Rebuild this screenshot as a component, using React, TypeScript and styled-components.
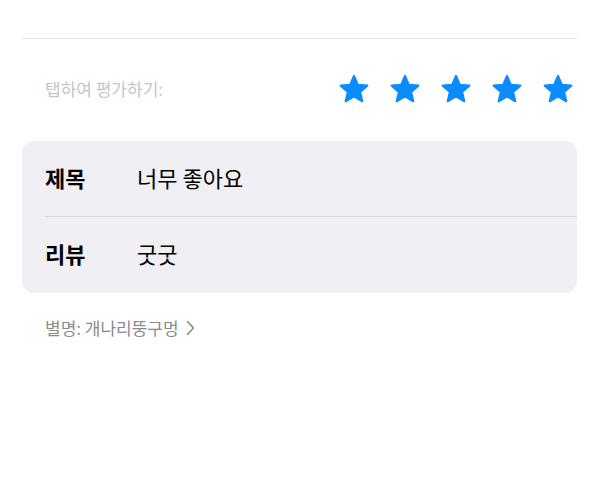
import styled, { createGlobalStyle } from "styled-components";

const Global = createGlobalStyle`
  html, body {
    margin: 0;
    padding: 0;
    background: #ffffff;
  }
  body {
    font-family: "Noto Sans CJK KR", "Noto Sans", sans-serif;
    -webkit-font-smoothing: antialiased;
  }
`;

const Page = styled.div`
  padding: 38px 23px 0 22px;
`;

const TopLine = styled.div`
  height: 1px;
  background: #e3e3e6;
`;

const RatingRow = styled.div`
  display: flex;
  align-items: center;
  justify-content: space-between;
  height: 100px;
  padding: 0 3px 0 23px;
`;

const RatingLabel = styled.span`
  font-size: 17px;
  color: #c5c5c8;
  padding-bottom: 2px;
`;

const Stars = styled.div`
  display: flex;
  gap: 19px;
`;

const Card = styled.div`
  margin-top: 2px;
  background: #efeff4;
  border-radius: 12px;
  overflow: hidden;
`;

const Row = styled.div<{ $divider?: boolean }>`
  display: flex;
  align-items: center;
  height: 76px;
  margin-left: 23px;
  padding-bottom: 4px;
  box-sizing: border-box;
  border-bottom: ${(p) => (p.$divider ? "1px solid #d6d6da" : "none")};
`;

const Key = styled.span`
  width: 92px;
  font-size: 22px;
  font-weight: 700;
  color: #000;
`;

const Value = styled.span`
  font-size: 22px;
  color: #000;
`;

const Nickname = styled.div`
  display: flex;
  align-items: center;
  gap: 7px;
  padding: 22px 0 0 23px;
  font-size: 17px;
  color: #8a8a8e;
`;

function Star() {
  return (
    <svg width="32" height="32" viewBox="0 0 24 24">
      <polygon
        points="12,2.2 14.9,8.9 22,9.5 16.6,14.2 18.2,21.2 12,17.5 5.8,21.2 7.4,14.2 2,9.5 9.1,8.9"
        fill="#0a8cff"
        stroke="#0a8cff"
        strokeWidth="1.6"
        strokeLinejoin="round"
      />
    </svg>
  );
}

function Chevron() {
  return (
    <svg width="9" height="16" viewBox="0 0 9 16">
      <path d="M1.5 1.5 L7.5 8 L1.5 14.5" fill="none" stroke="#8a8a8e" strokeWidth="1.6" strokeLinecap="round" strokeLinejoin="round" />
    </svg>
  );
}

export default function App() {
  return (
    <Page>
      <Global />
      <TopLine />
      <RatingRow>
        <RatingLabel>탭하여 평가하기:</RatingLabel>
        <Stars>
          {[0, 1, 2, 3, 4].map((i) => (
            <Star key={i} />
          ))}
        </Stars>
      </RatingRow>
      <Card>
        <Row $divider>
          <Key>제목</Key>
          <Value>너무 좋아요</Value>
        </Row>
        <Row>
          <Key>리뷰</Key>
          <Value>굿굿</Value>
        </Row>
      </Card>
      <Nickname>
        <span>별명: 개나리뚱구멍</span>
        <Chevron />
      </Nickname>
    </Page>
  );
}
